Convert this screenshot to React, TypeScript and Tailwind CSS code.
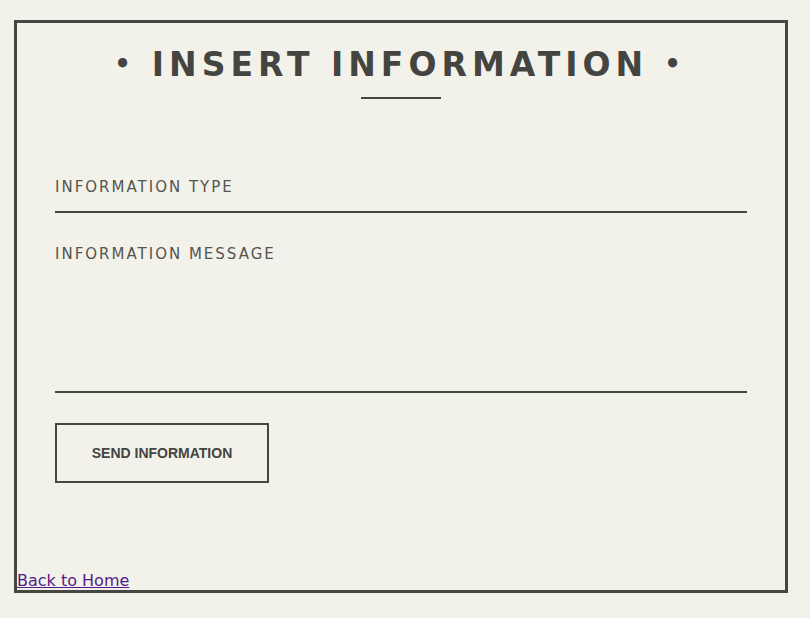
import { useState } from 'react';

const MONT = "font-['DejaVu_Sans',sans-serif]";

export default function App() {
  const [infoType, setInfoType] = useState('');
  const [message, setMessage] = useState('');

  return (
    <div className="min-h-screen bg-[#f2f2ea] pt-[20px] pl-[14px]">
      <div className="w-[774px] h-[573px] border-[3px] border-[#464642] flex flex-col">
        <div className="flex-1 px-[38px]">
          {/* Heading */}
          <h1
            className={`${MONT} mt-[25px] flex items-center justify-center gap-[21px] text-[33px] leading-[33px] font-bold text-[#444440]`}
          >
            <span className="text-[26px]">•</span>
            <span className="tracking-[5px] mr-[-5px]">INSERT INFORMATION</span>
            <span className="text-[26px] pr-[7px]">•</span>
          </h1>
          <div className="mx-auto mt-[16px] w-[80px] h-[2px] bg-[#464642]" />

          {/* Form */}
          <form className="mt-[71px] flex flex-col" onSubmit={e => e.preventDefault()}>
            <input
              value={infoType}
              onChange={e => setInfoType(e.target.value)}
              placeholder="INFORMATION TYPE"
              className={`${MONT} block w-full h-[43px] bg-transparent outline-none pt-[9px] pb-[17px] leading-[15px] text-[15px] tracking-[2px] text-[#4f4f4a] placeholder:text-[#55554f] border-b-2 border-[#464642]`}
            />
            <textarea
              value={message}
              onChange={e => setMessage(e.target.value)}
              placeholder="INFORMATION MESSAGE"
              className={`${MONT} mt-[23px] block w-full h-[157px] resize-none bg-transparent outline-none pt-[11px] leading-[15px] text-[15px] tracking-[2px] text-[#4f4f4a] placeholder:text-[#55554f] border-b-2 border-[#464642]`}
            />
            <button
              type="submit"
              className="mt-[30px] w-[214px] h-[60px] border-2 border-[#464642] font-['Liberation_Sans',Arial,sans-serif] text-[14px] font-bold text-[#444440]"
            >
              SEND INFORMATION
            </button>
          </form>
        </div>

        <a
          href="#"
          className={`${MONT} block w-fit text-[16px] leading-[19px] text-[#551a8b] underline`}
        >
          Back to Home
        </a>
      </div>
    </div>
  );
}
